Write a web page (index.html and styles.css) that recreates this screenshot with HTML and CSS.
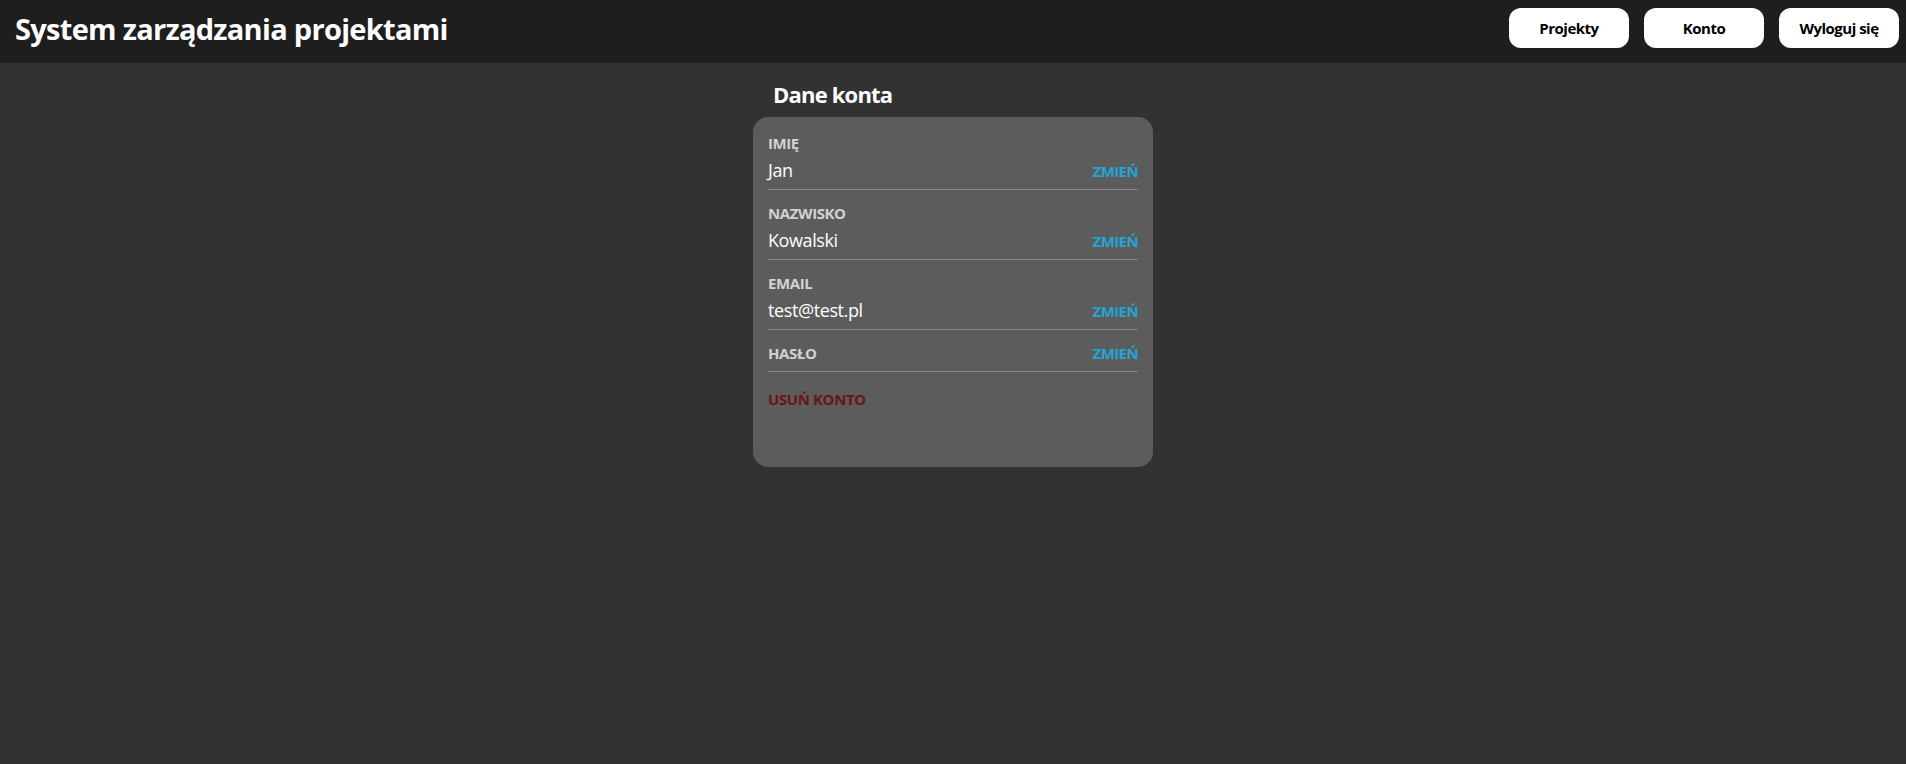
FILE: index.html
```html
<!DOCTYPE html>
<html lang="pl">
<head>
<meta charset="utf-8">
<title>System zarządzania projektami</title>
<link rel="stylesheet" href="styles.css">
</head>
<body>
<header class="topbar">
  <h1 class="app-title">System zarządzania projektami</h1>
  <nav class="nav">
    <button class="nav-btn">Projekty</button>
    <button class="nav-btn">Konto</button>
    <button class="nav-btn">Wyloguj się</button>
  </nav>
</header>
<main class="account">
  <h2 class="account-title">Dane konta</h2>
  <section class="card">
    <div class="field">
      <div class="label">IMIĘ</div>
      <div class="row"><span class="value">Jan</span><a class="change">ZMIEŃ</a></div>
    </div>
    <div class="field">
      <div class="label">NAZWISKO</div>
      <div class="row"><span class="value">Kowalski</span><a class="change">ZMIEŃ</a></div>
    </div>
    <div class="field">
      <div class="label">EMAIL</div>
      <div class="row"><span class="value">test@test.pl</span><a class="change">ZMIEŃ</a></div>
    </div>
    <div class="field field-inline">
      <div class="label">HASŁO</div>
      <a class="change">ZMIEŃ</a>
    </div>
    <a class="delete">USUŃ KONTO</a>
  </section>
</main>
</body>
</html>
```
FILE: styles.css
```css
* { box-sizing: border-box; }
body {
  margin: 0;
  background: #323232;
  font-family: "Open Sans", "Noto Sans", sans-serif;
  color: #fff;
}
.topbar {
  height: 63px;
  background: #1e1e1e;
  display: flex;
  justify-content: space-between;
  align-items: flex-start;
  padding: 0 7px 0 15px;
}
.app-title {
  margin: 0;
  font-size: 29px;
  line-height: 40px;
  padding-top: 9px;
  font-weight: 700;
  letter-spacing: -0.7px;
}
.nav {
  display: flex;
  gap: 15px;
  padding-top: 8px;
}
.nav-btn {
  width: 120px;
  height: 40px;
  border: none;
  border-radius: 12px;
  background: #fff;
  color: #000;
  font-family: inherit;
  font-weight: 700;
  font-size: 15px;
  letter-spacing: -0.5px;
}
.account {
  width: 400px;
  margin: 0 auto;
  padding-top: 16px;
}
.account-title {
  margin: 0 0 8px 20px;
  font-size: 22px;
  line-height: 30px;
  font-weight: 700;
  letter-spacing: -0.8px;
}
.card {
  background: #5c5c5c;
  border-radius: 15px;
  height: 350px;
  padding: 16px 15px 0;
}
.field {
  border-bottom: 1px solid #8a8a8a;
  padding-bottom: 6px;
  margin-bottom: 13px;
}
.label {
  font-size: 15px;
  line-height: 20px;
  font-weight: 700;
  color: #d2d2d2;
  letter-spacing: -0.4px;
}
.row {
  display: flex;
  justify-content: space-between;
  align-items: baseline;
  margin-top: 5px;
  line-height: 24px;
}
.value {
  font-size: 18px;
  color: #fff;
  letter-spacing: -0.4px;
}
.change {
  font-size: 15px;
  font-weight: 700;
  color: #1fa6d6;
  letter-spacing: -0.6px;
  cursor: pointer;
}
.field-inline {
  display: flex;
  justify-content: space-between;
  align-items: baseline;
  margin-top: 2px;
  padding-bottom: 8px;
  margin-bottom: 17px;
}
.field-inline .change { line-height: 20px; }
.delete {
  display: block;
  font-size: 15px;
  line-height: 20px;
  font-weight: 700;
  color: #6c1414;
  letter-spacing: -0.4px;
  cursor: pointer;
}
```
